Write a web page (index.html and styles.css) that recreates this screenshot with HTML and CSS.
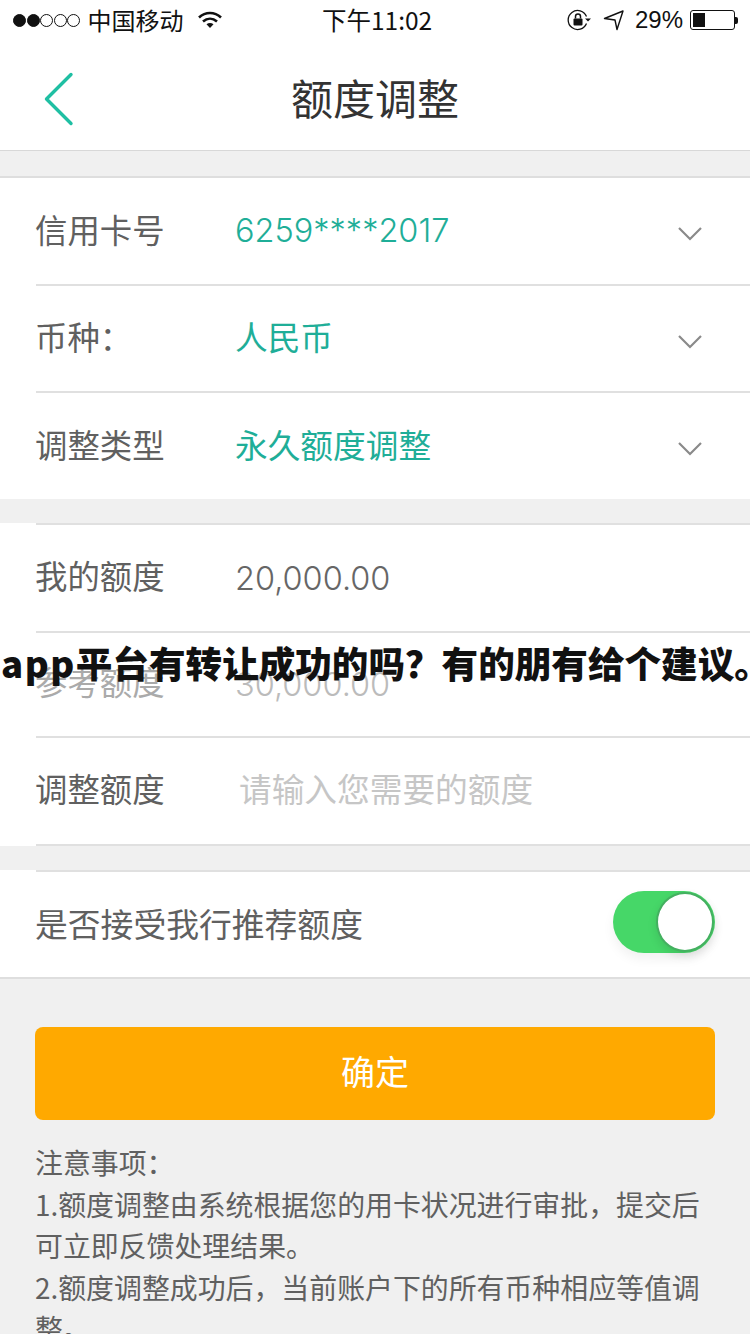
FILE: index.html
```html
<!DOCTYPE html>
<html lang="zh-CN">
<head>
<meta charset="utf-8">
<title>额度调整</title>
<link rel="stylesheet" href="styles.css">
</head>
<body>
<div class="page">
  <div class="status">
    <div class="status-left">
      <span class="signal"><i class="on"></i><i class="on"></i><i></i><i></i><i></i></span>
      <span class="carrier">中国移动</span>
      <svg class="wifi" width="26" height="20" viewBox="0 0 26 20"><path d="M2 7.500C8.500 1.500 17.500 1.500 24 7.500" fill="none" stroke="#111" stroke-width="2.600"/><path d="M6 11.500C10.300 7.800 15.700 7.800 20 11.500" fill="none" stroke="#111" stroke-width="2.600"/><path d="M9.500 14.200C11.700 12.500 14.300 12.500 16.500 14.200L13 18z" fill="#111"/></svg>
    </div>
    <div class="status-time">下午11:02</div>
    <div class="status-right">
      <svg class="lock" width="24" height="24" viewBox="0 0 24 24"><path d="M19.500 8.500A9.500 9.500 0 1 0 19.500 15.500" fill="none" stroke="#111" stroke-width="1.300"/><path d="M18 10.500h6l-3 3z" fill="#111"/><rect x="6.500" y="10.500" width="9" height="7" rx="1" fill="#111"/><path d="M8.500 10.500V8.500a2.500 2.500 0 0 1 5 0v2" fill="none" stroke="#111" stroke-width="1.500"/></svg>
      <svg class="arrow" width="22" height="22" viewBox="0 0 22 22"><path d="M1.500 9.500L20 2 14 20.500 12 11z" fill="none" stroke="#111" stroke-width="1.400" stroke-linejoin="round"/></svg>
      <span class="pct">29%</span>
      <span class="battery"><span class="battery-fill"></span></span>
      <span class="battery-tip"></span>
    </div>
  </div>

  <div class="nav">
    <svg class="back" width="32" height="54" viewBox="0 0 32 54"><path d="M28 2.500L3.500 27 28 51.500" fill="none" stroke="#1fbfa3" stroke-width="3.400" stroke-linecap="round" stroke-linejoin="round"/></svg>
    <h1 class="title">额度调整</h1>
  </div>

  <div class="group g1">
    <div class="row r108"><span class="label">信用卡号</span><span class="value teal num">6259****2017</span><svg class="chev" width="26" height="18" viewBox="0 0 26 18"><path d="M2 3l11 11L24 3" fill="none" stroke="#8a8a8a" stroke-width="2.200"/></svg></div>
    <div class="row"><span class="label">币种：</span><span class="value teal">人民币</span><svg class="chev" width="26" height="18" viewBox="0 0 26 18"><path d="M2 3l11 11L24 3" fill="none" stroke="#8a8a8a" stroke-width="2.200"/></svg></div>
    <div class="row last r106"><span class="label">调整类型</span><span class="value teal">永久额度调整</span><svg class="chev" width="26" height="18" viewBox="0 0 26 18"><path d="M2 3l11 11L24 3" fill="none" stroke="#8a8a8a" stroke-width="2.200"/></svg></div>
  </div>

  <div class="group g2">
    <div class="row first r110"><span class="label">我的额度</span><span class="value num">20,000.00</span></div>
    <div class="row dim r105"><span class="label">参考额度</span><span class="value num">30,000.00</span></div>
    <div class="row r108"><span class="label">调整额度</span><span class="value placeholder">请输入您需要的额度</span></div>
  </div>

  <div class="group g3">
    <div class="row first last"><span class="label">是否接受我行推荐额度</span><span class="toggle"><span class="knob"></span></span></div>
  </div>

  <div class="confirm">确定</div>

  <div class="notes">
    <p>注意事项：</p>
    <p>1.额度调整由系统根据您的用卡状况进行审批，提交后可立即反馈处理结果。</p>
    <p>2.额度调整成功后，当前账户下的所有币种相应等值调整。</p>
  </div>

  <div class="overlay"><span class="latin">app</span>平台有转让成功的吗？有的朋有给个建议。</div>
</div>
</body>
</html>
```
FILE: styles.css
```css
* { box-sizing: border-box; }
html, body { margin: 0; padding: 0; }
body { font-family: "Noto Sans CJK SC", "Noto Sans", sans-serif; background: #f0f0f0; }
.page { position: relative; width: 750px; height: 1334px; overflow: hidden; background: #f0f0f0; color: #555; }

.status { display: flex; justify-content: space-between; align-items: center; height: 40px; background: #fff; color: #111; font-size: 24px; padding: 0 12px 0 13px; position: relative; }
.status-left { display: flex; align-items: center; gap: 7.500px; width: 260px; }
.signal { display: flex; gap: 0.500px; }
.signal i { display: block; width: 13px; height: 13px; border-radius: 50%; border: 1px solid #111; }
.signal i.on { background: #111; }
.carrier { line-height: 40px; }
.wifi { margin-left: 6px; }
.status-time { font-size: 24.500px; line-height: 40px; position: absolute; left: 322px; top: 0; }
.status-right { display: flex; align-items: center; font-family: "Liberation Sans", sans-serif; }
.lock { margin-right: 12px; }
.arrow { margin-right: 10px; }
.pct { font-size: 24px; margin-right: 7px; }
.battery { display: flex; width: 45px; height: 20px; border: 1px solid #111; border-radius: 3px; padding: 2px; }
.battery-fill { display: block; width: 12px; background: #111; }
.battery-tip { width: 3px; height: 7px; background: #111; border-radius: 0 2px 2px 0; }

.nav { position: relative; height: 111px; background: #fff; border-bottom: 1px solid #d8d8d8; display: flex; align-items: center; justify-content: center; }
.back { position: absolute; left: 43px; top: 32px; }
.title { margin: 0; font-size: 42px; font-weight: 400; color: #333; line-height: 1; position: relative; top: 2px; }

.group { background: #fff; }
.g1 { margin-top: 25px; border-top: 2px solid #dedede; }
.g2 { margin-top: 24px; }
.g3 { margin-top: 24px; border-bottom: 2px solid #dedede; }
.row { display: flex; align-items: center; height: 107px; margin-left: 36px; padding-bottom: 6px; font-size: 32.400px; border-bottom: 2px solid #e0e0e0; }
.row.r108 { height: 108px; }
.row.r110 { height: 110px; }
.row.r106 { height: 106px; }
.row.r105 { height: 105px; }
.row.first { border-top: 2px solid #e0e0e0; }
.row.last { border-bottom: 0; }
.g2 .row { padding-bottom: 8px; }
.g3 .row { justify-content: space-between; padding-right: 36px; padding-bottom: 5px; font-size: 32.800px; }
.label { width: 200px; margin-left: -1px; color: #606060; flex: none; }
.g3 .label { width: auto; }
.value { color: #666; }
.teal { color: #1fae98; font-size: 32.700px; }
.num { font-family: Inter, "Liberation Sans", sans-serif; font-weight: 300; font-size: 32.500px; margin-top: 5px; }
.g2 .num { margin-top: 8px; }
.placeholder { color: #c6c6c6; padding-left: 4px; font-size: 32.700px; }
.dim .label { color: #aaa; }
.dim .value { color: #bbb; }
.chev { flex: none; margin-left: auto; margin-right: 47px; margin-top: 12px; }

.toggle { display: block; position: relative; width: 102px; height: 62px; margin-right: -1px; margin-bottom: 1px; border-radius: 31px; background: #46d768; box-shadow: 0 6px 12px rgba(0,0,0,.06); }
.knob { position: absolute; right: 1px; top: 1px; width: 58px; height: 60px; border-radius: 50%; background: #fff; border: 2px solid #44b060; box-shadow: 0 4px 10px rgba(0,0,0,.1); }

.confirm { margin: 48px 35px 0; height: 93px; border-radius: 8px; background: #ffa900; color: #fff; font-size: 34px; padding-bottom: 6px; display: flex; align-items: center; justify-content: center; }

.notes { padding: 22px 36px 0 35px; font-size: 27.900px; line-height: 41.500px; color: #606060; }
.notes p { margin: 0; }

.overlay { position: absolute; left: 0; top: 637px; width: 790px; white-space: nowrap; font-size: 36.600px; line-height: 52px; font-weight: 900; color: #111; padding-left: 1px; }
.latin { letter-spacing: 1.500px; }
```
